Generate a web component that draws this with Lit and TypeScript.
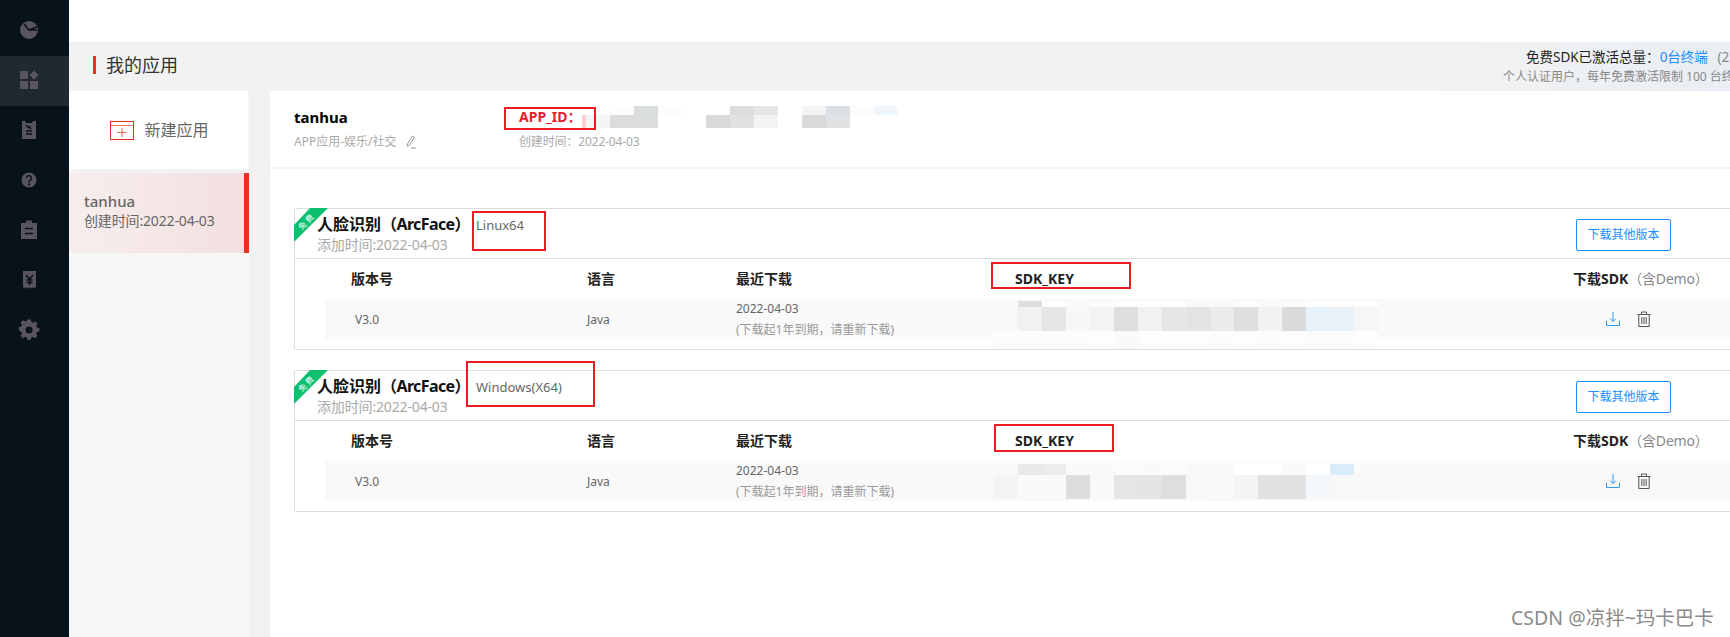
import { LitElement, html, css, svg } from "lit";
import { customElement } from "lit/decorators.js";

type Mosaic = { left: number; top: number; cols: number[]; rows: { h: number; c: string[] }[] };
type Card = {
  platform: string;
  platformBox: number[];
  keyBox: number[];
  mosaic: Mosaic;
};

const k1: Mosaic = {
  left: 699,
  top: 92,
  cols: [],
  rows: [
    { h: 6, c: ["f9f9f9", "dedede", "fdfdfd", "f9f9f9", "fcfcfc", "fdfdfd", "fdfdfd", "fdfdfd", "f9f9f9", "f9f9f9", "fdfdfd", "f9f9f9", "fbfbfb", "fdfdfd", "fdfdfd", "fdfdfd"] },
    { h: 24, c: ["f8f8f8", "f1f1f1", "e5e7e6", "f6f8f7", "f3f3f3", "dfdddd", "f1f1f1", "e6e6e6", "e2e3e5", "ebebeb", "dfdfdf", "f2f2f2", "dbdbdb", "e6f1f9", "eaf2f9", "f6f6f6"] },
    { h: 18, c: ["fcfcfc", "fcfcfc", "fcfcfc", "fcfcfc", "fdfdfd", "fafafa", "fdfdfd", "fdfdfd", "fdfdfd", "fcfcfc", "fdfdfd", "fcfcfc", "fdfdfd", "fbfbfb", "fcfcfc", "fdfdfd"] },
  ],
};
const k2: Mosaic = {
  left: 699,
  top: 93,
  cols: [],
  rows: [
    { h: 11, c: ["f9f9f7", "e9e9e9", "ececec", "fafafa", "fafafa", "fbfbfb", "fafafa", "fbfbfb", "f8f8f8", "f8f8f8", "ffffff", "ffffff", "f9f9f9", "ffffff", "d9ecf9", "fafafa", "fafafa"] },
    { h: 24, c: ["f4f4f4", "fafafa", "fafafa", "dddddd", "f9f9f7", "e5e5e3", "e3e4e6", "dedede", "f8f8f8", "fafafa", "f4f4f4", "e1e1e1", "e1e1e1", "f3f7fa", "f8f8f8", "f8f8f8", "f8f8f8"] },
  ],
};

const cards: Card[] = [
  { platform: "Linux64", platformBox: [177, 2, 74, 40], keyBox: [696, 53, 140, 27], mosaic: k1 },
  { platform: "Windows(X64)", platformBox: [171, -10, 129, 46], keyBox: [699, 53, 120, 28], mosaic: k2 },
];

const appIdMosaic = [
  { h: 9, c: ["", "fcfcfc", "d9dddd", "fcfcfc", "", "", "dadcdd", "e7e6e4", "", "f3f3f3", "d9dfe2", "fcfcfc", "eff6fc"] },
  { h: 13, c: ["f5f5f5", "dcdcdc", "dcdddd", "", "", "d9d9db", "e2e2e2", "f2f4f4", "", "d9d9d9", "e0e2e4", "", ""] },
];

const navIcons = [
  svg`<circle cx="12" cy="11" r="9" class="f"/><path d="M7 5l5 6 8-3M12 11l8 0" class="d"/>`,
  svg`<path d="M3 2h8v8H3zM13 12h8v8h-8zM3 12h8v8H3zM17 1.500l4.500 4.500-4.500 4.500-4.500-4.500z" class="f"/>`,
  svg`<path d="M5 2h3l1 2h6l1-2h3v18H5z" class="f"/><path d="M9 12h6M9 15h6M9 6l3 3M12 7l2 3" class="d"/>`,
  svg`<circle cx="12" cy="11" r="7.500" class="f"/><path d="M9.500 9a2.500 2.500 0 1 1 3.800 2.200c-.9.600-1.300 1-1.300 2" class="d" /><path d="M11 14.500h2v2h-2z" fill="#07121a"/>`,
  svg`<path d="M4 4h5V1.500h6V4h5v16H4z" class="f"/><path d="M8 9.500h8M8 14.500h8" class="d"/>`,
  svg`<path d="M6 2h13v16l-1.600 1.500L16 18l-1.500 1.500L13 18l-1.500 1.500L10 18l-1.500 1.500L7 18l-1 1z" class="f"/><path d="M9 6l3.500 4L16 6M12.500 10v6M9.500 11h6M9.500 13.500h6" class="d"/>`,
  svg`<path d="M10.300 2h3.400l.5 2.500 1.800.8 2.200-1.400 2.400 2.400-1.400 2.200.8 1.800 2.500.5v3.400l-2.500.5-.8 1.800 1.400 2.200-2.400 2.400-2.200-1.400-1.800.8-.5 2.500h-3.400l-.5-2.500-1.800-.8-2.200 1.400-2.400-2.400 1.400-2.200-.8-1.800L1.500 13V9.600l2.500-.5.8-1.800-1.400-2.200 2.400-2.400 2.200 1.400 1.800-.8z" class="f" transform="translate(.3 -1.500) scale(.98)"/><circle cx="12" cy="11" r="3.500" fill="#07121a"/>`,
];

@customElement("app-root")
export class AppRoot extends LitElement {
  static styles = css`
    :host {
      display: block;
      width: 1730px;
      height: 637px;
      overflow: hidden;
      position: relative;
      font-family: "Noto Sans", "Noto Sans CJK SC", sans-serif;
      background: #fff;
      color: #333;
    }
    .root { display: flex; height: 637px; }
    .side { width: 69px; flex: none; background: #07121a; padding-top: 6px; box-sizing: border-box; }
    .nav { height: 50px; display: flex; align-items: center; padding-left: 17px; }
    .nav.on { background: #20292f; }
    .nav svg { width: 24px; height: 24px; display: block; }
    .nav .f { fill: #59555f; }
    .nav .d { fill: none; stroke: #07121a; stroke-width: 1.500; }
    .right { flex: 1; min-width: 0; display: flex; flex-direction: column; }
    .top { height: 42px; flex: none; }
    .band {
      height: 49px; flex: none; display: flex; justify-content: space-between; align-items: stretch;
      background: linear-gradient(90deg, #f2f2f2 82%, #e9eef4 100%);
    }
    .ptitle { display: flex; align-items: center; padding-left: 24px; gap: 10px; font-size: 18px; line-height: 24px; color: #333; height: 45px; }
    .ptitle i { width: 3px; height: 18px; background: #e8301f; display: block; }
    .quota { width: 227px; overflow: hidden; white-space: nowrap; padding-top: 5px; box-sizing: border-box; }
    .q1 { padding-left: 23px; font-size: 13.500px; line-height: 21px; color: #222; }
    .q1 b { font-weight: 400; color: #1890ff; margin: 0 6px 0 0; }
    .q1 em { font-style: normal; color: #888; }
    .q2 { font-size: 12px; line-height: 18px; color: #888; }
    .body { flex: 1; display: flex; min-height: 0; background: #f2f2f2; }
    .list { width: 180px; flex: none; display: flex; flex-direction: column; background: #f7f7f7; }
    .new { width: 179px; height: 78px; flex: none; box-sizing: border-box; padding-left: 2px; background: #fff; display: flex; align-items: center; justify-content: center; gap: 10px; font-size: 16px; line-height: 24px; color: #666; }
    .new svg { width: 24px; height: 19px; display: block; }
    .gapbar { height: 4px; background: #f2f2f2; flex: none; }
    .sel {
      height: 80px; flex: none; box-sizing: border-box; border-right: 5px solid #e8301f;
      background: linear-gradient(90deg, #f7eeee, #f3dfdf);
      padding: 18px 0 0 15px; color: #666;
    }
    .sel .n { font-size: 15px; line-height: 20px; font-weight: 500; }
    .sel .d { font-size: 14px; line-height: 18px; margin-top: 1px; letter-spacing: -0.150px; }
    .main { margin-left: 21px; flex: 1; min-width: 0; background: #fff; overflow: hidden; }
    .apphead { height: 76px; border-bottom: 2px solid #f2f2f2; display: flex; padding-left: 24px; position: relative; }
    .app1 { width: 225px; flex: none; padding-top: 15px; }
    .app1 .n { font-size: 15px; line-height: 22px; font-weight: 700; color: #000; }
    .app1 .m { font-size: 12px; line-height: 18px; color: #aaa; margin-top: 5px; display: flex; align-items: center; gap: 8px; }
    .app1 svg { width: 12px; height: 14px; display: block; }
    .app2 { padding-top: 16px; }
    .app2 .id { font-size: 14px; line-height: 20px; font-weight: 700; color: #e8202a; }
    .app2 .m { font-size: 12px; line-height: 18px; color: #aaa; margin-top: 6px; letter-spacing: -0.150px; }
    .appmos { position: absolute; left: 316px; top: 15px; display: grid; grid-template-columns: repeat(13, 24px); }
    .appmos span { display: block; }
    .pink { position: absolute; left: 312px; top: 24px; width: 4px; height: 13px; background: #fbd0d0; }
    .cards { padding: 39px 0 0 24px; display: flex; flex-direction: column; gap: 20px; }
    .card { width: 1480px; border: 1px solid #ddd; position: relative; border-radius: 2px 0 0 2px; padding-bottom: 10px; }
    .ribbon { position: absolute; left: -1px; top: -1px; width: 36px; height: 36px; display: block; }
    .ribbon text { font-size: 8px; fill: #fff; }
    .chead { height: 49px; border-bottom: 1px solid #ddd; display: flex; align-items: flex-start; padding-left: 22px; }
    .ctitle { width: 159px; flex: none; padding-top: 4px; }
    .ctitle .t { font-size: 16px; line-height: 22px; font-weight: 700; color: #111; white-space: nowrap; }
    .ctitle .t span { letter-spacing: -0.600px; }
    .ctitle .s { font-size: 14px; line-height: 20px; color: #aaa; letter-spacing: -0.150px; }
    .plat { width: 1100px; flex: none; font-size: 13px; line-height: 20px; padding-top: 6px; color: #666; }
    .btn { box-sizing: border-box; width: 95px; height: 32px; margin-top: 10px; border: 1px solid #1890ff; border-radius: 2px; color: #1890ff; font-size: 12px; line-height: 30px; text-align: center; flex: none; }
    .tgrid { margin-left: 30px; display: grid; grid-template-columns: 262px 149px 279px 558px 250px; }
    .th { height: 40px; display: flex; align-items: center; font-size: 14px; line-height: 20px; font-weight: 700; color: #222; }
    .th.first { padding-left: 26px; }
    .th span { font-weight: 400; color: #888; letter-spacing: -0.200px; }
    .td { height: 40px; background: #f9f9f9; display: flex; align-items: center; font-size: 12px; line-height: 21px; color: #666; }
    .td.first { padding-left: 30px; }
    .td .two { display: flex; flex-direction: column; }
    .td .two em { font-style: normal; color: #999; white-space: nowrap; }
    .acts { padding-left: 32px; gap: 15px; }
    .acts svg { width: 16px; height: 16px; display: block; }
    .mark { position: absolute; box-sizing: border-box; border: 2px solid #ed1c24; pointer-events: none; }
    .appbox { left: 234px; top: 16px; width: 92px; height: 23px; }
    .mos { position: absolute; display: grid; grid-auto-flow: row; }
    .mos span { display: block; }
    .wm { position: absolute; left: 1511px; top: 605px; font-size: 19.500px; line-height: 26px; color: #8a8a8a; text-shadow: 0 0 1px #fff; white-space: nowrap; }
  `;

  private mosaic(m: Mosaic) {
    const n = Math.max(...m.rows.map((r) => r.c.length));
    return html`<div
      class="mos"
      style="left:${m.left}px;top:${m.top}px;grid-template-columns:repeat(${n},24px);grid-template-rows:${m.rows.map((r) => r.h + "px").join(" ")}"
    >
      ${m.rows.map((r) => r.c.map((c) => html`<span style="background:#${c}"></span>`))}
    </div>`;
  }

  private card(c: Card) {
    const box = (b: number[]) => `left:${b[0]}px;top:${b[1]}px;width:${b[2]}px;height:${b[3]}px`;
    return html`<div class="card">
      <div class="chead">
        <div class="ctitle">
          <div class="t">人脸识别<span>（ArcFace）</span></div>
          <div class="s">添加时间:2022-04-03</div>
        </div>
        <div class="plat">${c.platform}</div>
        <div class="btn">下载其他版本</div>
      </div>
      <div class="tgrid">
        <div class="th first">版本号</div>
        <div class="th">语言</div>
        <div class="th">最近下载</div>
        <div class="th">SDK_KEY</div>
        <div class="th">下载SDK<span>（含Demo）</span></div>
        <div class="td first">V3.0</div>
        <div class="td">Java</div>
        <div class="td"><div class="two"><span>2022-04-03</span><em>(下载起1年到期，请重新下载)</em></div></div>
        <div class="td"></div>
        <div class="td acts">
          <svg viewBox="0 0 16 16" fill="none" stroke="#2d9cf5" stroke-width="1">
            <path d="M8 1v9.500M5 7.500l3 3 3-3M1.500 9.500v5h13v-5"/>
          </svg>
          <svg viewBox="0 0 16 16" fill="none" stroke="#555" stroke-width="1">
            <path d="M1.500 3.500h13M5.500 3.500V1h5v2.500M2.800 3.500v12h10.400v-12M5.800 6v7M8 6v7M10.200 6v7"/>
          </svg>
        </div>
      </div>
      ${this.mosaic(c.mosaic)}
      <svg class="ribbon" viewBox="0 0 36 36">
        <path d="M0 17L16 0h18L0 34z" fill="#0cc070"/>
        <text x="12" y="17" text-anchor="middle" transform="rotate(-45 12 14)">免 费</text>
      </svg>
      <div class="mark" style=${box(c.platformBox)}></div>
      <div class="mark" style=${box(c.keyBox)}></div>
    </div>`;
  }

  render() {
    return html`<div class="root">
        <div class="side">
          ${navIcons.map(
            (ic, i) => html`<div class="nav ${i === 1 ? "on" : ""}"><svg viewBox="0 0 24 24">${ic}</svg></div>`
          )}
        </div>
        <div class="right">
          <div class="top"></div>
          <div class="band">
            <div class="ptitle"><i></i>我的应用</div>
            <div class="quota">
              <div class="q1">免费SDK已激活总量：<b>0台终端</b> <em>(2</em></div>
              <div class="q2">个人认证用户，每年免费激活限制 100 台终端</div>
            </div>
          </div>
          <div class="body">
            <div class="list">
              <div class="new">
                <svg viewBox="0 0 24 19" fill="none">
                  <rect x=".5" y=".5" width="23" height="18" stroke="#e8301f"/>
                  <path d="M1 4.500h22" stroke="#ee7a6c"/>
                  <path d="M7.500 11.500h9M12 7v9" stroke="#e8604f"/>
                </svg>
                新建应用
              </div>
              <div class="gapbar"></div>
              <div class="sel">
                <div class="n">tanhua</div>
                <div class="d">创建时间:2022-04-03</div>
              </div>
            </div>
            <div class="main">
              <div class="apphead">
                <div class="app1">
                  <div class="n">tanhua</div>
                  <div class="m">
                    APP应用-娱乐/社交
                    <svg viewBox="0 0 12 14" fill="none" stroke="#999" stroke-width="1">
                      <path d="M7.500 1l2 1.200-5 8-2.200 1 .2-2.300zM6 13h5"/>
                    </svg>
                  </div>
                </div>
                <div class="app2">
                  <div class="id">APP_ID：</div>
                  <div class="m">创建时间：2022-04-03</div>
                </div>
                <div class="appmos">
                  ${appIdMosaic.map((r) =>
                    r.c.map((c) => html`<span style="height:${r.h}px;background:${c ? "#" + c : "transparent"}"></span>`)
                  )}
                </div>
                <div class="pink"></div>
                <div class="mark appbox"></div>
              </div>
              <div class="cards">${cards.map((c) => this.card(c))}</div>
            </div>
          </div>
        </div>
      </div>
      <div class="wm">CSDN @凉拌~玛卡巴卡</div>`;
  }
}
